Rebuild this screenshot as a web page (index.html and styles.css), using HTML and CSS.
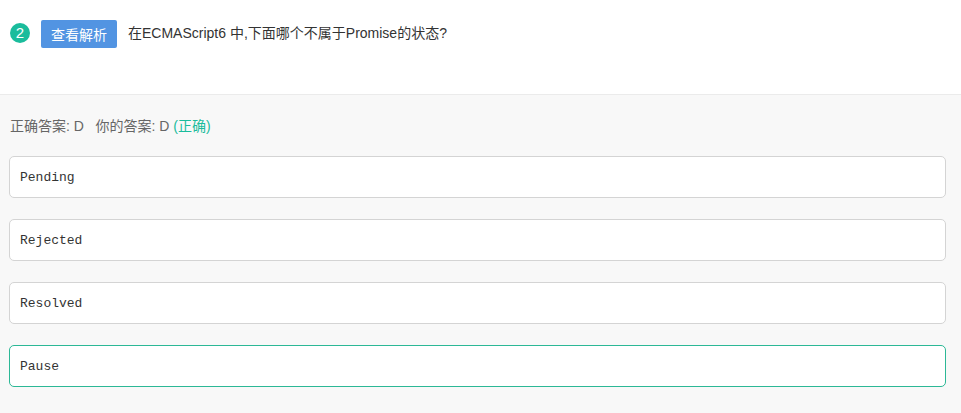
FILE: index.html
```html
<!DOCTYPE html>
<html>
<head>
<meta charset="utf-8">
<link rel="stylesheet" href="styles.css">
</head>
<body>
<div class="question">
  <span class="num">2</span>
  <button class="btn">查看解析</button>
  <span class="title">在ECMAScript6 中,下面哪个不属于Promise的状态?</span>
</div>
<div class="answers">
  <div class="result">正确答案: D&nbsp;&nbsp;&nbsp;你的答案: D <span class="ok">(正确)</span></div>
  <div class="options">
    <div class="opt">Pending</div>
    <div class="opt">Rejected</div>
    <div class="opt">Resolved</div>
    <div class="opt sel">Pause</div>
  </div>
</div>
</body>
</html>
```
FILE: styles.css
```css
html, body { margin: 0; padding: 0; }
body {
  font-family: "Liberation Sans", Arial, "Noto Sans CJK SC", sans-serif;
  font-size: 14px;
  color: #333;
  background: #f8f8f8;
  width: 961px;
  height: 413px;
  overflow: hidden;
}
.question {
  background: #fff;
  height: 95px;
  border-bottom: 1px solid #ebebeb;
  display: flex;
  align-items: flex-start;
  padding: 20px 0 0 10px;
  box-sizing: border-box;
}
.num {
  width: 20px;
  height: 20px;
  border-radius: 50%;
  background: #1abc9c;
  color: #fff;
  font-size: 15px;
  line-height: 20px;
  text-align: center;
  margin-top: 3px;
}
.btn {
  margin-left: 11px;
  width: 76px;
  height: 28px;
  border: none;
  border-radius: 2px;
  background: #5294e2;
  color: #fff;
  font-family: inherit;
  font-size: 14px;
  padding: 0;
}
.title {
  margin-left: 11px;
  line-height: 26px;
}
.answers {
  padding: 22px 15px 0 9px;
}
.result {
  color: #666;
  line-height: 18px;
  padding-left: 1px;
}
.ok { color: #1abc9c; }
.options {
  margin-top: 21px;
  display: flex;
  flex-direction: column;
  gap: 21px;
}
.opt {
  height: 42px;
  box-sizing: border-box;
  border: 1px solid #d4d4d4;
  border-radius: 5px;
  background: #fff;
  font-family: "Liberation Mono", "Courier New", monospace;
  font-size: 13px;
  line-height: 41px;
  padding-left: 10px;
  color: #333;
}
.opt.sel { border-color: #2cb896; }
```
